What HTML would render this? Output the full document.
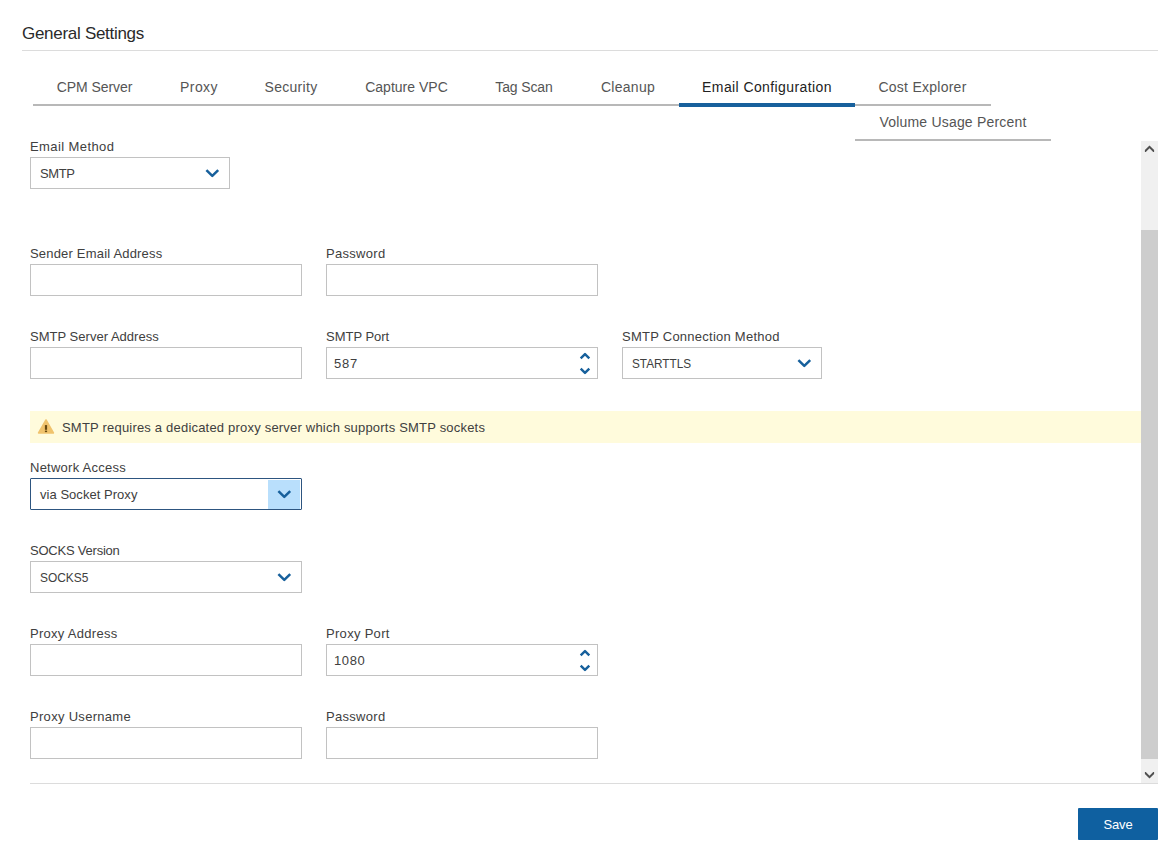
<!DOCTYPE html>
<html lang="en">
<head>
<meta charset="utf-8">
<title>General Settings</title>
<style>
html,body{margin:0;padding:0;background:#fff;}
body{width:1172px;height:855px;position:relative;overflow:hidden;font-family:"Liberation Sans",sans-serif;color:#333;-webkit-font-smoothing:antialiased;}
.abs{position:absolute;}
h2.title{position:absolute;left:22px;top:24px;margin:0;font-weight:normal;font-size:17px;line-height:20px;color:#2a2a2a;letter-spacing:-0.29px;white-space:nowrap;}
.hr{position:absolute;height:1px;background:#dcdcdc;}
ul.tabs{list-style:none;margin:0;padding:0;}
ul.tabs li{position:absolute;height:33px;line-height:33px;border-bottom:2px solid #b8b8b8;font-size:14px;color:#555;text-align:center;white-space:nowrap;box-sizing:content-box;}
ul.tabs li.active{color:#222;border-bottom:none;}
ul.tabs li.active:after{content:"";position:absolute;left:0;right:0;top:32px;height:4px;background:#17609c;}
label{position:absolute;font-size:13px;line-height:16px;color:#404040;white-space:nowrap;}
.box{position:absolute;box-sizing:border-box;height:32px;margin:0;border-radius:0;outline:none;font-family:"Liberation Sans",sans-serif;border:1px solid #c2c2c2;background:#fff;font-size:13px;line-height:32px;padding-left:9px;color:#404040;white-space:nowrap;}
.box.focus{border-color:#2d5580;border-radius:1px;}
.box svg{position:absolute;}
.sx{display:inline-block;transform-origin:0 50%;}
.chev{right:9px;top:10px;}
.ddbtn{position:absolute;right:1px;top:1px;width:32px;height:29px;background:#b9dffc;}
.banner{position:absolute;left:30px;top:411px;width:1111px;height:32px;background:#fffbdc;font-size:13px;line-height:32px;color:#404040;white-space:nowrap;}
.banner span{position:absolute;left:32px;top:1px;letter-spacing:0.2px;}
.save{position:absolute;left:1078px;top:808px;width:80px;height:32px;background:#0f60a0;color:#fff;border:0;border-radius:1px;font-family:"Liberation Sans",sans-serif;font-size:13px;line-height:30px;text-align:center;padding:2px 0 0 0;box-sizing:border-box;letter-spacing:-0.2px;}
.sb{position:absolute;left:1141px;top:141px;width:17px;height:642px;background:#f0f0f0;}
.sb .thumb{position:absolute;left:0;top:89px;width:17px;height:529px;background:#cdcdcd;}
.sb svg{position:absolute;left:0;}
</style>
</head>
<body>
<h2 class="title">General Settings</h2>
<div class="hr" style="left:22px;top:50px;width:1136px;"></div>

<ul class="tabs">
  <li style="left:33px;top:71px;width:124px;letter-spacing:-0.07px;text-indent:-1px;">CPM Server</li>
  <li style="left:157px;top:71px;width:85px;letter-spacing:0.4px;text-indent:-1px;">Proxy</li>
  <li style="left:242px;top:71px;width:100px;letter-spacing:0.29px;text-indent:-2px;">Security</li>
  <li style="left:342px;top:71px;width:129px;letter-spacing:0.02px;">Capture VPC</li>
  <li style="left:471px;top:71px;width:106px;letter-spacing:-0.12px;">Tag Scan</li>
  <li style="left:577px;top:71px;width:102px;letter-spacing:0.27px;">Cleanup</li>
  <li class="active" style="left:679px;top:71px;width:176px;letter-spacing:0.4px;">Email Configuration</li>
  <li style="left:855px;top:71px;width:136px;letter-spacing:0.26px;text-indent:-1px;">Cost Explorer</li>
  <li style="left:855px;top:106px;width:196px;letter-spacing:0.19px;">Volume Usage Percent</li>
</ul>

<label style="left:30px;top:139px;letter-spacing:0.4px;">Email Method</label>
<div class="box" style="left:30px;top:157px;width:200px;letter-spacing:-0.4px;">SMTP
  <svg class="chev" width="16" height="10" viewBox="-8 -5 16 10"><polyline points="-5.6,-2.9 0.3,2.9 6.2,-2.9" fill="none" stroke="#17609c" stroke-width="2.5" stroke-linejoin="round"/></svg>
</div>

<label style="left:30px;top:246px;letter-spacing:0.19px;">Sender Email Address</label>
<input class="box" type="text" style="left:30px;top:264px;width:272px;">
<label style="left:326px;top:246px;letter-spacing:0.3px;">Password</label>
<input class="box" type="password" style="left:326px;top:264px;width:272px;">

<label style="left:30px;top:329px;letter-spacing:0.02px;">SMTP Server Address</label>
<input class="box" type="text" style="left:30px;top:347px;width:272px;">
<label style="left:326px;top:329px;letter-spacing:-0.02px;">SMTP Port</label>
<div class="box" style="left:326px;top:347px;width:272px;padding-left:7px;letter-spacing:0.8px;">587
  <svg style="right:6px;top:4px;" width="12" height="23" viewBox="0 0 12 23"><polyline points="1.7,6.4 6,2.1 10.3,6.4" fill="none" stroke="#17609c" stroke-width="2.4" stroke-linejoin="round"/><polyline points="1.7,16.6 6,20.9 10.3,16.6" fill="none" stroke="#17609c" stroke-width="2.4" stroke-linejoin="round"/></svg>
</div>
<label style="left:622px;top:329px;letter-spacing:0.25px;">SMTP Connection Method</label>
<div class="box" style="left:622px;top:347px;width:200px;"><span class="sx" style="transform:scaleX(.905)">STARTTLS</span>
  <svg class="chev" width="16" height="10" viewBox="-8 -5 16 10"><polyline points="-5.6,-2.9 0.3,2.9 6.2,-2.9" fill="none" stroke="#17609c" stroke-width="2.5" stroke-linejoin="round"/></svg>
</div>

<div class="banner">
  <svg class="abs" style="left:7px;top:7px;" width="18" height="16" viewBox="0 0 18 16"><g transform="translate(0,0.4)"><path d="M9 1.6 L16.4 14.6 L1.6 14.6 Z" fill="#f0c36d" stroke="#f0c36d" stroke-width="1.6" stroke-linejoin="round"/><rect x="7.9" y="6.7" width="2.2" height="4.7" fill="#66480f"/><rect x="7.9" y="12.2" width="2.2" height="1.5" fill="#66480f"/></g></svg>
  <span>SMTP requires a dedicated proxy server which supports SMTP sockets</span>
</div>

<label style="left:30px;top:460px;letter-spacing:0.25px;">Network Access</label>
<div class="box focus" style="left:30px;top:478px;width:272px;letter-spacing:0.04px;">via Socket Proxy
  <div class="ddbtn"></div>
  <svg class="chev" width="16" height="10" viewBox="-8 -5 16 10"><polyline points="-5.6,-2.9 0.3,2.9 6.2,-2.9" fill="none" stroke="#17609c" stroke-width="2.5" stroke-linejoin="round"/></svg>
</div>

<label style="left:30px;top:543px;letter-spacing:-0.22px;">SOCKS Version</label>
<div class="box" style="left:30px;top:561px;width:272px;"><span class="sx" style="transform:scaleX(.918)">SOCKS5</span>
  <svg class="chev" width="16" height="10" viewBox="-8 -5 16 10"><polyline points="-5.6,-2.9 0.3,2.9 6.2,-2.9" fill="none" stroke="#17609c" stroke-width="2.5" stroke-linejoin="round"/></svg>
</div>

<label style="left:30px;top:626px;letter-spacing:0.28px;">Proxy Address</label>
<input class="box" type="text" style="left:30px;top:644px;width:272px;">
<label style="left:326px;top:626px;letter-spacing:0.3px;">Proxy Port</label>
<div class="box" style="left:326px;top:644px;width:272px;padding-left:7px;letter-spacing:0.6px;">1080
  <svg style="right:6px;top:4px;" width="12" height="23" viewBox="0 0 12 23"><polyline points="1.7,6.4 6,2.1 10.3,6.4" fill="none" stroke="#17609c" stroke-width="2.4" stroke-linejoin="round"/><polyline points="1.7,16.6 6,20.9 10.3,16.6" fill="none" stroke="#17609c" stroke-width="2.4" stroke-linejoin="round"/></svg>
</div>

<label style="left:30px;top:709px;letter-spacing:0.3px;">Proxy Username</label>
<input class="box" type="text" style="left:30px;top:727px;width:272px;">
<label style="left:326px;top:709px;letter-spacing:0.3px;">Password</label>
<input class="box" type="password" style="left:326px;top:727px;width:272px;">

<div class="sb">
  <svg style="top:0" width="17" height="17" viewBox="0 0 17 17"><path d="M8.5 4.5 L13.1 9.1 L13.1 11 L12.2 11 L8.5 7.3 L4.8 11 L3.9 11 L3.9 9.1 Z" fill="#505050"/></svg>
  <div class="thumb"></div>
  <svg style="top:625px" width="17" height="17" viewBox="0 0 17 17"><path d="M8.5 12.5 L13.1 7.9 L13.1 6 L12.2 6 L8.5 9.7 L4.8 6 L3.9 6 L3.9 7.9 Z" fill="#505050"/></svg>
</div>
<div class="hr" style="left:30px;top:783px;width:1128px;"></div>
<button class="save">Save</button>
</body>
</html>
